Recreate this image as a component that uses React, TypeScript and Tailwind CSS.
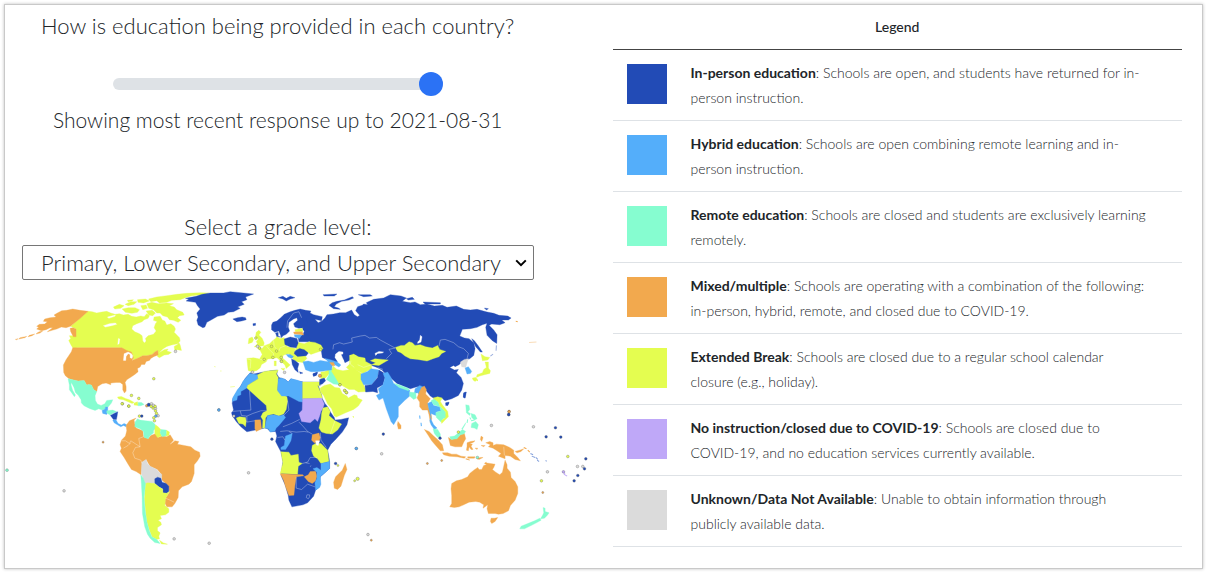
import { useState } from "react";

const NAVY = "#224bb6";
const BLUE = "#54aefa";
const MINT = "#86fdd0";
const ORANGE = "#f2a94e";
const YELLOW = "#e4fd50";
const PURPLE = "#bfa8f8";
const GREY = "#dbdbdb";

const LEGEND = [
  { swatch: "bg-[#224bb6]", name: "In-person education", text: "Schools are open, and students have returned for in-person instruction." },
  { swatch: "bg-[#54aefa]", name: "Hybrid education", text: "Schools are open combining remote learning and in-person instruction." },
  { swatch: "bg-[#86fdd0]", name: "Remote education", text: "Schools are closed and students are exclusively learning remotely." },
  { swatch: "bg-[#f2a94e]", name: "Mixed/multiple", text: "Schools are operating with a combination of the following: in-person, hybrid, remote, and closed due to COVID-19." },
  { swatch: "bg-[#e4fd50]", name: "Extended Break", text: "Schools are closed due to a regular school calendar closure (e.g., holiday)." },
  { swatch: "bg-[#bfa8f8]", name: "No instruction/closed due to COVID-19", text: "Schools are closed due to COVID-19, and no education services currently available." },
  { swatch: "bg-[#dbdbdb]", name: "Unknown/Data Not Available", text: "Unable to obtain information through publicly available data." },
];

type Shape = [fill: string, d: string];
type Dot = [fill: string, x: number, y: number, r?: number];
type Region = { x: number; y: number; shapes: Shape[]; lines?: Shape[]; borders?: string; dots?: Dot[] };

const REGIONS: Region[] = [
  {
    // North America
    x: 0,
    y: 285,
    shapes: [
      [YELLOW, "M264,79L276,80 290,84 305,81 320,79 332,84 345,88 358,86 370,90 384,88 395,94 408,96 422,93 432,95 440,86 448,92 444,100 432,104 426,110 410,116 398,122 395,132 404,140 418,146 426,152 428,168 433,174 438,168 436,160 444,152 460,148 468,138 462,128 466,116 474,106 484,104 494,108 500,120 512,116 522,124 526,132 522,142 530,150 538,158 540,168 532,176 514,180 500,184 488,192 476,204 492,194 504,192 500,198 508,200 514,202 505,208 492,210 478,218 472,214 473,196 465,200 456,208 440,212 428,212 414,219 400,225 396,210 388,207 380,200 372,198 365,188 218,188 212,178 206,166 212,160 208,152 218,152 228,150 228,132 212,124Z"],
      [YELLOW, "M445,42L470,36 500,32 530,28 560,25 600,23 625,24 605,29 575,32 555,38 540,44 515,46 500,52 478,54 470,47 452,50Z"],
      [YELLOW, "M440,56L455,52 475,56 500,54 520,56 508,62 522,66 530,74 548,82 552,90 538,92 532,98 542,106 534,112 520,106 508,104 502,96 488,92 480,84 470,84 460,74 446,70Z"],
      [YELLOW, "M366,72L385,68 405,68 418,74 412,82 395,85 376,82Z M340,66L358,58 372,62 362,70 344,72Z M375,58L392,50 410,50 402,58 384,62Z M412,44L436,42 448,48 430,54 414,52Z M422,62L438,60 442,70 428,74Z M438,78L456,76 466,84 458,92 446,90Z M462,96L480,94 486,104 472,110 460,106Z M382,46L400,44 396,48 384,50Z"],
      [YELLOW, "M522,184L532,178 536,172 540,180 544,196 532,194 524,196Z M214,172L224,178 230,190 226,192 216,182Z"],
      [ORANGE, "M264,79L238,102 211,124 198,128 184,126 170,132 156,136 142,140 158,128 150,128 138,134 124,137 110,132 116,127 110,124 118,118 134,117 142,110 130,109 134,102 150,98 168,96 162,90 172,84 185,77 200,76 218,72 240,76Z"],
      [ORANGE, "M118,140L128,138 120,144 108,147 112,143Z M88,151L104,147 96,152 84,155Z M60,158L80,154 74,158 56,162Z M46,163L54,161 50,164Z M210,130L219,128 228,132 228,155 220,155 212,140Z"],
      [ORANGE, "M218,188L365,188 372,192 380,196 394,201 397,209 400,218 396,226 414,219 428,212 440,212 456,208 465,200 473,196 474,210 462,214 452,220 448,226 438,229 434,238 424,238 420,246 412,250 414,260 404,268 394,275 380,284 375,292 378,304 378,318 373,324 368,314 368,298 360,292 348,292 332,294 332,299 318,294 306,296 293,304 290,319 281,314 274,300 266,298 260,300 252,286 234,288 218,284 206,280 196,272 191,262 190,240 198,224 206,212 214,200Z"],
      ["#ffffff", "M372,206L384,201 394,206 398,212 396,220 390,218 390,208 384,206 378,214 377,226 370,226 371,216Z M355,160L359,162 357,176 353,178Z M310,122L328,116 346,114 350,118 334,122 316,126Z M322,96L346,90 344,94 326,100Z"],
      [MINT, "M204,281L218,284 234,288 252,286 260,300 266,298 274,300 281,314 290,319 285,332 286,346 292,357 303,361 314,356 320,346 338,344 334,354 324,366 316,366 315,372 306,375 296,371 285,376 268,370 252,362 244,354 243,344 234,330 226,322 222,308 214,292 213,300 218,316 226,330 223,335 214,322 208,314 208,300Z"],
      [BLUE, "M306,376L315,372 316,366 323,366 323,378 320,388 308,385Z"],
      [MINT, "M320,377L338,375 350,380 340,384 330,390 320,384Z"],
      [YELLOW, "M352,336L364,334 376,340 388,344 402,352 396,355 384,350 370,344 356,342Z M402,354L412,350 414,361 402,360Z"],
      [MINT, "M414,352L424,352 432,358 422,362 414,362Z"],
    ],
    dots: [
      [GREY, 526, 199], [YELLOW, 461, 281], [YELLOW, 394, 331], [YELLOW, 416, 340], [YELLOW, 367, 356], [YELLOW, 386, 363],
      [ORANGE, 440, 362], [NAVY, 446, 359, 5], [GREY, 454, 356], [GREY, 460, 361], [YELLOW, 453, 364], [YELLOW, 459, 369], [GREY, 466, 370], [YELLOW, 465, 364], [YELLOW, 466, 377], [YELLOW, 469, 385],
    ],
  },
  {
    // South America
    x: 60,
    y: 400,
    shapes: [
      [NAVY, "M151,46L162,40 173,35 171,48 169,58 160,58Z"],
      [BLUE, "M158,60L168,60 174,70 184,75 192,70 200,74 198,80 190,76 182,80 172,74 162,68Z"],
      [ORANGE, "M228,54L222,60 224,72 228,84 248,92 250,110 264,116 272,106 288,100 294,112 306,108 320,110 330,104 340,120 330,132 344,122 356,124 352,132 372,136 392,140 404,150 418,156 420,168 412,182 402,194 402,220 394,244 386,252 366,260 355,272 354,292 344,310 336,320 320,320 315,310 315,296 328,276 324,256 306,240 302,220 292,208 270,198 258,178 246,186 243,224 228,214 214,208 204,192 192,172 180,154 184,144 180,134 184,120 196,108 200,92 198,76 208,62Z"],
      [MINT, "M232,56L240,60 256,62 276,64 284,72 288,82 280,92 280,99 270,106 264,116 252,112 250,94 240,86 224,80 225,66Z"],
      [YELLOW, "M286,74L294,80 302,88 300,96 304,108 292,112 284,100 284,88Z M318,90L328,96 326,106 316,108 319,98Z"],
      [MINT, "M302,88L318,90 318,106 306,110 300,98Z"],
      [GREY, "M245,186L258,178 262,190 270,198 290,208 298,218 305,222 304,238 290,232 284,238 282,250 262,248 256,252 248,234 244,218Z"],
      [NAVY, "M284,236L292,231 302,234 306,246 318,250 326,258 326,274 320,279 308,278 308,266 296,260 284,250Z"],
      [YELLOW, "M256,251L262,248 284,250 296,260 308,267 308,278 320,279 328,274 316,296 314,316 326,326 326,336 316,344 300,346 304,356 294,360 302,366 304,374 292,382 292,392 300,398 296,408 298,416 290,418 276,410 268,390 260,364 256,330 253,296Z M298,420L310,428 322,432 304,431Z"],
      [MINT, "M242,224L249,234 256,251 252,292 255,330 260,364 267,390 275,410 290,418 300,430 284,427 270,414 262,402 254,380 247,340 246,290 244,254Z"],
    ],
    borders: "M184,122L196,122 208,130 212,122 240,140 236,115 250,110M190,144L204,136 212,128M240,140L226,142 218,158 224,174 242,180 246,190M316,294L330,300 342,306M330,132L344,122",
    dots: [
      [YELLOW, 186, 11], [YELLOW, 206, 18], [GREY, 12, 272], [GREY, 342, 416], [GREY, 447, 429], [BLUE, 476, 29], [ORANGE, 129, 126, 3],
      [YELLOW, 238, 48], [NAVY, 245, 48], [GREY, 294, 47], [BLUE, 287, 48], [YELLOW, 281, 53], [YELLOW, 283, 62],
    ],
  },
  {
    // Africa and Arabia
    x: 220,
    y: 360,
    shapes: [
      [NAVY, "M90,38L100,42 118,38 150,32 172,30 170,42 176,52 195,58 204,66 212,56 230,62 250,66 272,66 298,66 300,76 294,76 304,104 306,115 314,130 322,140 332,158 342,172 344,180 362,178 385,173 380,194 366,216 348,236 332,252 322,270 326,290 328,305 328,325 314,338 300,350 298,380 286,390 280,408 262,428 248,434 215,440 206,420 204,406 195,375 182,345 188,305 182,275 172,256 166,244 170,228 166,214 150,215 142,206 134,204 105,210 80,215 62,200 48,184 36,166 34,158 40,150 36,130 38,115 60,80 75,55Z"],
      [BLUE, "M88,40L100,42 112,44 114,56 98,66 82,76 80,84 62,94 62,104 52,108 50,120 36,124 38,112 52,88 62,78 68,64 78,52Z"],
      [YELLOW, "M112,44L132,34 150,32 174,30 168,42 174,52 172,90 184,102 200,110 202,122 198,148 190,162 175,168 160,162 142,166 136,174 134,204 127,204 128,180 122,170 128,158 140,152 138,136 80,84 82,76 98,66 114,56Z"],
      [BLUE, "M174,56L184,54 195,58 204,66 212,56 230,60 247,66 247,126 236,124 205,108 184,108 172,92Z"],
      [YELLOW, "M247,66L272,66 298,66 298,78 292,76 304,104 306,115 247,116Z"],
      [PURPLE, "M247,116L304,114 312,132 308,144 302,154 298,168 292,184 284,176 270,188 244,184 236,160 246,150Z"],
      [BLUE, "M142,166L160,164 178,168 190,164 196,172 186,184 176,196 168,204 164,213 150,216 144,206 134,204 138,182Z"],
      [ORANGE, "M104,180L121,179 124,206 108,214 104,206Z"],
      [YELLOW, "M48,174L58,170 76,172 78,184 76,200 68,192 56,190Z"],
      [YELLOW, "M308,144L322,140 330,154 326,166 344,182 364,192 352,210 336,222 318,220 304,216 296,204 302,180 304,160Z"],
      [ORANGE, "M276,224L296,219 300,232 296,246 282,248 274,240Z"],
      [YELLOW, "M276,256L286,250 302,250 322,270 326,304 302,310 292,296 280,288 274,272Z"],
      ["#ffffff", "M286,242L298,242 294,256 288,254Z"],
      [BLUE, "M196,228L216,220 212,242 204,256 196,268 182,268 182,262 192,256 194,240Z"],
      [YELLOW, "M182,275L206,276 212,286 234,282 236,306 246,310 234,318 232,342 180,340 188,308Z"],
      [ORANGE, "M180,341L228,343 248,344 250,347 228,350 224,376 221,405 206,406 196,380 190,360Z"],
      [ORANGE, "M252,350L264,344 270,334 286,333 290,348 286,362 276,370 264,364Z"],
      [BLUE, "M302,310L328,304 328,325 314,338 300,350 302,372 298,382 286,390 284,368 290,354 290,336 278,326 290,322 302,330Z"],
      [ORANGE, "M375,310L380,328 372,346 362,378 352,388 342,384 340,366 346,350 358,338 366,330Z"],
      [YELLOW, "M300,84L312,76 330,72 344,82 358,84 366,100 380,108 384,114 402,104 410,106 412,114 426,120 414,138 400,148 376,158 348,171 342,168 334,146 322,132 310,106 300,94Z"],
      [YELLOW, "M302,36L314,34 330,26 326,42 316,54 302,56Z"],
      [NAVY, "M298,58L312,54 316,62 306,72 298,74Z M278,42L292,38 288,46 280,48Z"],
      [MINT, "M326,28L336,26 348,36 346,48 360,66 358,74 340,72 318,58 326,44Z"],
    ],
    borders: "M88,92L90,120 92,150 60,152 36,154M60,152L64,166 80,168 98,160 122,152 140,152M80,168L80,186 104,182M202,122L206,150 190,166M188,200L214,190 230,182 238,178M180,214L200,212 228,216 252,214 264,216M236,186L248,198 262,214 276,222M216,220L206,214M300,218L302,240 318,262M246,310L262,306 270,292 290,292M268,310L256,308M272,316L270,320M228,350L228,384 244,388 262,372M262,372L284,380M172,232L188,230 194,240M344,182L330,222M268,404L260,404 258,412 264,416 268,410Z",
    dots: [
      [GREY, 97, 36], [GREY, 183, 3], [GREY, 193, 37], [NAVY, 155, 237], [GREY, 85, 338], [BLUE, 408, 265], [NAVY, 346, 310], [YELLOW, 353, 316, 3], [YELLOW, 412, 356, 5], [YELLOW, 403, 362, 3],
      [ORANGE, 299, 47, 5], [YELLOW, 359, 74], [YELLOW, 374, 92], [YELLOW, 379, 98], [GREY, 41, 168],
    ],
  },
  {
    // Asia
    x: 330,
    y: 290,
    shapes: [
      [NAVY, "M-72,66L-62,68 -50,74 -24,80 -26,92 -46,88 -36,98 -24,92 -16,84 -10,74 10,72 28,68 46,68 64,60 72,74 82,80 88,76 76,62 82,50 96,46 100,42 112,44 108,38 130,28 160,24 180,14 212,18 228,24 216,34 240,38 254,36 270,44 290,42 312,48 336,46 350,52 378,48 400,58 420,60 440,58 470,66 490,70 506,76 532,78 542,84 534,90 514,90 524,98 508,104 484,102 476,106 490,120 500,134 499,160 486,152 470,136 466,112 470,100 456,104 440,112 420,116 396,118 388,138 402,144 416,146 430,158 434,176 430,196 418,206 398,212 386,224 374,230 370,226 358,232 372,240 384,238 378,248 392,262 399,280 394,300 384,316 364,326 344,332 334,324 316,328 300,318 280,292 260,290 240,296 200,280 180,262 165,250 155,240 140,232 120,225 100,215 75,195 58,195 60,210 44,218 38,204 32,190 16,192 18,206 28,216 10,218 -8,210 -24,202 -26,188 -28,176 -50,162 -60,158 -66,150 -84,140 -78,124 -84,116 -72,100 -76,84Z"],
      [NAVY, "M-4,46L6,38 20,34 42,30 66,20 70,24 56,30 34,34 18,42 12,50 24,54 30,58 10,56Z M84,14L120,14 126,18 100,20Z M-22,14L20,12 12,18 -18,18Z M228,26L246,22 252,28 234,30Z M278,36L330,38 330,42 284,42Z M462,54L474,56 468,60Z"],
      [NAVY, "M424,146L432,152 444,168 456,186 450,186 436,170Z M400,310L406,306 404,324 399,322Z M346,340L356,338 352,346Z"],
      ["#ffffff", "M270,136L275,140 272,156 262,160 262,156 268,150Z M134,190L146,184 160,186 156,189 142,190 136,196Z M16,192L26,184 38,186 38,192 28,194 30,204 40,210 36,220 40,234 28,238 20,226 22,214 14,202Z"],
      [YELLOW, "M195,172L212,166 222,166 236,155 246,158 254,166 270,164 286,170 306,174 322,166 328,178 346,184 334,190 326,200 308,206 290,213 262,208 240,206 224,198 212,188 202,184Z"],
      [YELLOW, "M58,196L70,192 84,200 104,204 106,214 124,224 124,238 112,242 98,250 76,240 58,240 48,232 58,222Z M120,212L134,206 156,208 174,210 160,218 146,226 124,224 136,218Z"],
      [YELLOW, "M8,228L20,238 38,242 60,238 78,240 94,250 92,266 100,284 108,304 84,306 72,298 56,298 38,288 26,280 12,256 4,244Z"],
      [BLUE, "M92,252L112,244 122,236 138,238 146,240 142,260 124,284 100,284 92,268Z"],
      [NAVY, "M146,240L160,248 164,262 158,284 140,294 142,308 128,304 106,306 104,286 124,284 142,262Z"],
      [BLUE, "M158,250L172,246 182,262 190,280 210,292 238,300 238,318 222,332 204,350 204,380 190,404 182,394 168,356 158,324 146,330 138,316 148,310 144,296 158,284 164,264Z M254,296L268,286 282,292 276,304 270,320 262,308 252,310Z"],
      [MINT, "M192,280L206,284 236,296 234,302 206,292Z M238,306L256,308 258,324 250,328 238,318Z"],
      [GREY, "M390,216L402,208 414,206 410,218 406,232 394,230Z"],
      [BLUE, "M404,234L414,230 424,244 420,250 410,252Z"],
      [YELLOW, "M452,192L464,200 478,202 472,210 456,212Z M464,216L474,216 474,234 480,242 478,250 462,254 448,258 438,262 440,254 456,248 460,238 468,232Z M426,264L436,262 442,268 434,274 428,270Z"],
    ],
    lines: [[ORANGE, "M556,94L562,95"], ["#f9dcb8", "M596,157L618,156"], ["#9aaede", "M498,166L497,182M488,192L480,198"]],
    borders: "M8,178L10,164 28,158 40,162 66,156 64,144 90,138 104,136 118,144 138,142 150,150 176,164 194,174M326,168L330,150 344,148 370,158 384,170 400,176 414,190 410,206M194,174L176,178 184,190 168,206M72,232L60,222 62,212M124,224L100,232 82,224M142,232L158,238",
    dots: [[YELLOW, 29, 284], [YELLOW, 43, 301], [YELLOW, 48, 307], [ORANGE, 536, 364], [NAVY, 535, 373]],
  },
  {
    // Europe, Greenland and the Caucasus
    x: 180,
    y: 285,
    shapes: [
      [NAVY, "M48,34L66,28 90,24 130,24 150,20 190,24 220,27 196,36 200,44 184,50 192,58 172,66 180,70 160,80 144,82 132,90 112,94 94,104 80,112 74,126 68,128 54,120 50,106 54,96 50,84 60,72 52,62 46,52 18,48 26,42 16,40Z"],
      [NAVY, "M158,102L172,98 186,96 196,98 198,104 184,108 170,110Z M294,38L308,34 318,40 330,34 344,38 330,42 318,48 308,42Z M218,116L226,115 226,121 219,122Z"],
      [NAVY, "M274,120L278,112 290,108 304,96 312,88 330,80 344,76 360,72 376,76 392,78 386,90 378,96 382,116 372,128 356,130 344,126 340,116 352,106 350,98 340,102 326,112 324,126 328,138 318,148 308,152 304,158 296,138 284,142 274,134Z M286,144L294,142 294,154 302,156 290,156Z"],
      [YELLOW, "M200,220L220,218 238,222 246,208 240,196 232,190 246,190 252,182 268,176 278,166 286,160 290,154 298,160 312,158 316,170 320,184 346,190 354,172 372,176 386,170 404,172 422,180 428,190 422,198 404,204 392,208 384,202 374,210 380,220 368,232 350,230 340,224 326,206 310,210 306,218 322,232 330,240 318,250 314,240 300,226 290,218 278,220 262,222 258,230 244,238 240,248 230,256 216,260 204,256 202,240Z"],
      [YELLOW, "M228,142L236,136 242,142 236,150 246,160 252,174 250,182 234,184 222,186 232,176 228,170 234,162 226,154Z M206,160L216,156 220,164 216,172 204,176Z M344,134L366,130 368,140 346,140Z M302,250L314,250 310,256Z M282,228L288,228 288,242 282,242Z"],
      [NAVY, "M312,162L330,156 350,160 354,174 348,188 330,186 314,178Z M354,158L366,150 384,150 390,164 384,170 356,170Z M344,198L358,190 372,194 384,204 378,212 352,214 342,206Z M334,222L344,226 356,236 352,250 354,262 344,254 336,238Z M358,260L368,264 360,266Z M398,266L412,260 408,270 400,274Z"],
      [ORANGE, "M340,141L366,140 370,150 342,147Z"],
      [BLUE, "M342,149L364,150 358,160 344,156Z M318,208L330,208 340,214 334,220 324,216Z"],
      [BLUE, "M368,230L384,228 400,232 420,226 444,230 456,240 454,254 430,258 408,260 392,260 376,254Z M434,220L450,224 470,230 482,240 476,246 462,238 448,234Z"],
      [ORANGE, "M448,232L460,232 464,242 456,242Z"],
    ],
    lines: [["#f1fda6", "M102,244L106,246M120,258L124,258M150,306L164,304"]],
    borders: "M320,128L322,108 340,84 356,80M356,80L364,98M258,182L268,194 280,206 278,218M280,166L282,184 292,196M200,222L212,224 210,250M316,182L300,188 296,198M346,190L344,200M238,222L260,228",
    dots: [[YELLOW, 227, 159], [GREY, 232, 184], [YELLOW, 238, 189], [YELLOW, 274, 184], [YELLOW, 289, 198], [YELLOW, 252, 223], [YELLOW, 278, 217], [YELLOW, 303, 217], [YELLOW, 304, 229], [YELLOW, 421, 193], [BLUE, 116, 375]],
  },
  {
    // South-East Asia and Oceania
    x: 350,
    y: 380,
    shapes: [
      [ORANGE, "M200,54L206,38 214,22 222,18 228,28 226,42 240,56 232,68 236,86 242,100 244,116 240,128 236,104 232,90 216,90 208,80 208,66Z"],
      [BLUE, "M232,70L244,64 250,76 268,80 272,92 258,96 256,106 242,100 242,118 250,134 260,144 252,148 242,134 238,122 242,110 236,88Z"],
      [MINT, "M242,62L252,56 264,66 268,76 286,96 288,112 278,116 272,126 258,112 256,98 272,92 268,80 250,74Z M248,146L262,148 270,162 270,176 260,170 252,160Z"],
      [YELLOW, "M248,54L262,50 276,54 270,64 276,74 292,94 294,110 284,120 274,130 272,122 286,112 286,96 268,76 264,66Z"],
      [ORANGE, "M143,124L152,136 152,146 144,147 141,134Z M222,148L236,154 250,168 264,180 276,194 280,212 270,212 256,196 244,182 234,166Z"],
      [ORANGE, "M276,218L292,218 304,222 318,222 332,228 346,230 342,234 320,230 296,228 280,224Z"],
      [ORANGE, "M294,172L304,178 320,174 330,164 342,160 346,176 340,186 334,200 314,200 300,196Z"],
      [MINT, "M298,170L312,168 322,160 336,148 346,154 340,162 330,164 320,176 302,178Z"],
      [ORANGE, "M350,188L360,184 374,182 368,187 358,190 366,192 362,198 368,208 362,208 356,200 354,212 348,210 350,198Z M392,168L398,172 394,184 390,178Z M392,196L404,196 400,200Z M374,204L382,204 380,208Z"],
      [ORANGE, "M406,188L418,184 428,188 428,196 438,192 460,194 478,202 490,210 490,220 502,232 510,242 494,238 480,228 464,226 464,236 444,228 452,220 440,212 428,204 414,200 420,194Z M494,214L508,210 520,206 512,214 500,218Z M380,236L390,232 398,232 386,238Z M352,230L374,230 372,234 352,234Z M402,250L408,246 406,252Z"],
      [MINT, "M346,74L356,76 358,88 352,96 360,100 358,106 348,98Z M362,100L374,104 380,116 372,120 364,112Z M364,130L376,124 384,134 380,148 372,144 362,142Z M334,146L346,128 344,134 336,148Z"],
      [ORANGE, "M304,310L318,302 334,298 352,290 358,280 370,270 382,262 386,268 394,268 400,256 408,254 404,248 420,250 434,252 430,262 426,268 436,276 448,284 456,276 460,258 464,240 470,254 470,264 480,276 482,292 494,304 502,320 502,340 494,360 480,376 474,392 458,400 444,402 434,400 414,400 410,386 412,374 398,384 400,374 388,366 376,364 356,366 340,374 326,380 312,382 298,380 304,370 304,346 302,326Z M422,414L432,414 442,412 434,424 424,430 420,424Z"],
      [MINT, "M578,382L584,384 584,394 596,398 590,406 582,414 570,416 576,406 580,398Z M568,414L572,420 558,428 542,436 522,446 508,446 512,438 532,430 552,422Z"],
      [NAVY, "M340,38L348,36 344,54 339,50Z M286,68L296,66 292,76 286,76Z"],
    ],
    lines: [
      ["#86a2dc", "M540,220L548,224M544,228L554,232M556,232L562,238M560,240L566,244M586,240L588,244"],
      [PURPLE, "M636,276L644,280M640,282L650,288"],
      [BLUE, "M208,106L209,116M212,128L213,138"],
      [MINT, "M358,112L362,118M352,118L350,128M362,122L372,120"],
      [ORANGE, "M520,202L528,206M532,210L538,216M346,236L358,240"],
      [YELLOW, "M380,0L382,3M8,108L10,112"],
    ],
    borders: "M460,200L462,226",
    dots: [
      [ORANGE, 476, 95], [NAVY, 475, 104], [GREY, 423, 136], [GREY, 549, 140], [NAVY, 615, 143], [NAVY, 587, 170], [NAVY, 631, 171],
      [NAVY, 99, 162], [BLUE, 18, 205], [GREY, 94, 221], [YELLOW, 652, 229], [NAVY, 706, 236], [GREY, 681, 259], [GREY, 697, 259], [NAVY, 702, 266],
      [GREY, 591, 275], [PURPLE, 639, 275], [NAVY, 682, 286], [NAVY, 671, 302], [YELLOW, 573, 302], [ORANGE, 577, 337, 3], [GREY, 53, 463], [ORANGE, 63, 480, 3],
      [YELLOW, 324, 156], [NAVY, 269, 174], [MINT, 381, 232], [ORANGE, 231, 250, 3], [ORANGE, 274, 241, 3],
    ],
  },
];

function WorldMap() {
  return (
    <svg viewBox="0 285 600 265" className="block w-full" role="img" aria-label="World map">
      {REGIONS.map((region) => (
        <g key={`${region.x}-${region.y}`} transform={`translate(${region.x} ${region.y}) scale(0.33333)`}>
          {region.shapes.map(([fill, d]) => (
            <path key={d} d={d} fill={fill} stroke={fill} strokeWidth="1" strokeLinejoin="round" />
          ))}
          {region.lines?.map(([stroke, d]) => (
            <path key={d} d={d} fill="none" stroke={stroke} strokeWidth="3" />
          ))}
          {region.borders && <path d={region.borders} fill="none" stroke="#ffffff" strokeOpacity="0.6" strokeWidth="1.6" />}
        </g>
      ))}
      {REGIONS.map((region) => (
        <g key={`dots-${region.x}-${region.y}`} transform={`translate(${region.x} ${region.y}) scale(0.33333)`}>
          {region.dots?.map(([fill, x, y, r = 4]) => (
            <circle key={`${x}-${y}`} cx={x} cy={y} r={r} fill={fill} stroke="#555555" strokeOpacity="0.6" strokeWidth="1.6" />
          ))}
        </g>
      ))}
      <circle cx="7" cy="470" r="1.4" fill={MINT} stroke="#555555" strokeOpacity="0.6" strokeWidth="0.5" />
    </svg>
  );
}

export default function App() {
  const [day, setDay] = useState(100);

  return (
    <div className="p-1 font-['Lato',sans-serif] text-[#212529]">
      <main className="flex border border-[#c9c9c9] bg-white pb-[18px] shadow-[0_0_3px_rgba(0,0,0,0.25)]">
        <section className="w-1/2">
          <div className="mr-[70px] ml-[17px] flex flex-col items-center text-[22px] leading-8 font-light">
            <label htmlFor="day" className="mt-[5px]">How is education being provided in each country?</label>
            <input
              id="day"
              type="range"
              min="0"
              max="100"
              value={day}
              onChange={(event) => setDay(Number(event.target.value))}
              className="mt-[30px] h-6 w-[330px] appearance-none bg-transparent [&::-webkit-slider-runnable-track]:h-3 [&::-webkit-slider-runnable-track]:rounded-full [&::-webkit-slider-runnable-track]:bg-[#dee2e6] [&::-webkit-slider-thumb]:-mt-1.5 [&::-webkit-slider-thumb]:size-6 [&::-webkit-slider-thumb]:appearance-none [&::-webkit-slider-thumb]:rounded-full [&::-webkit-slider-thumb]:bg-[#2b72f5]"
            />
            <p className="mt-2 text-[21px]">Showing most recent response up to 2021-08-31</p>
            <label htmlFor="grade" className="mt-[75px]">Select a grade level:</label>
            <div className="relative mt-0.5 w-full">
              <select id="grade" className="block h-[35px] w-full appearance-none rounded-xs border border-[#767676] bg-white pr-8 pl-[18px] text-[22px] font-light">
                <option>Primary, Lower Secondary, and Upper Secondary</option>
              </select>
              <svg viewBox="0 0 12 8" className="pointer-events-none absolute top-3.5 right-[7px] h-2 w-3" aria-hidden="true">
                <path d="M1.2 1.4L6 6.2L10.8 1.4" fill="none" stroke="#000000" strokeWidth="2" />
              </svg>
            </div>
          </div>
          <div className="mt-[5px] mr-[3px] -ml-[5px]">
            <WorldMap />
          </div>
        </section>
        <section className="w-1/2 pr-5 pl-[9px]">
          <table className="w-full border-collapse text-[14px] leading-[25px] font-light">
            <thead>
              <tr className="border-b border-[#444444]">
                <th colSpan={2} scope="col" className="pt-[9px] pb-2.5 font-medium">Legend</th>
              </tr>
            </thead>
            <tbody>
              {LEGEND.map((row) => (
                <tr key={row.name} className="border-b border-[#dee2e6]">
                  <td className="w-[78px] pt-3.5 pl-3.5 align-top">
                    <div className={`size-10 ${row.swatch}`} />
                  </td>
                  <td className="py-2.5 pr-[34px] align-top">
                    <b className="font-bold">{row.name}</b>: {row.text}
                  </td>
                </tr>
              ))}
            </tbody>
          </table>
        </section>
      </main>
    </div>
  );
}
